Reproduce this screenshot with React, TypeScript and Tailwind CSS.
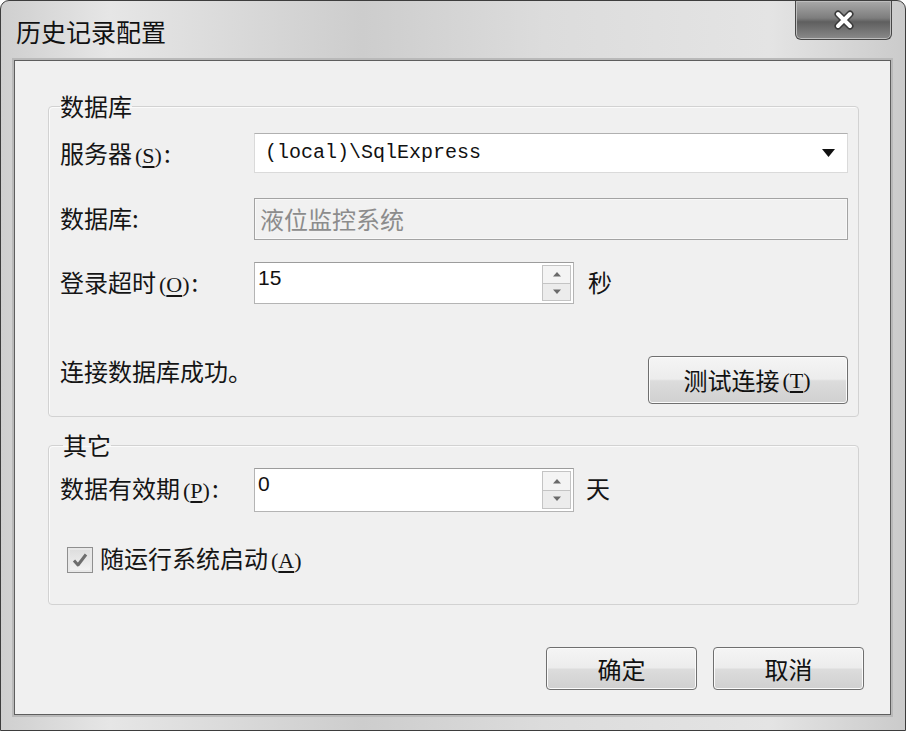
import type { ReactNode } from "react";

const cjk = "font-['Noto_Sans_CJK_SC','Noto_Sans',sans-serif]";

function Label({ children }: { children: ReactNode }) {
  return <div className="w-[194px] shrink-0 pt-[5px] text-[24px] leading-[30px] text-[#151515]">{children}</div>;
}

function Key({ k }: { k: string }) {
  return (
    <span className="ml-[3px] mr-[2px] font-['Liberation_Serif',serif] text-[22px]">
      (<span className="underline underline-offset-[3px]">{k}</span>)
    </span>
  );
}

function SpinBox({ value, tall }: { value: string; tall?: boolean }) {
  return (
    <div className={`flex w-[320px] border border-[#b4b4b4] border-t-[#9c9c9c] bg-white ${tall ? "h-[44px]" : "h-[42px]"}`}>
      <div className="flex-1 pl-[3px] pt-[3px] font-['Liberation_Sans',sans-serif] text-[21px] leading-[24px] text-[#111]">{value}</div>
      <div className="my-[2px] mr-[2px] flex w-[29px] flex-col border border-[#c4c4c4]">
        <div className="flex flex-1 items-center justify-center border-b border-[#c4c4c4] bg-[#f4f4f4]">
          <svg width="10" height="6" viewBox="0 0 10 6">
            <path d="M1 5.5 L5 1 L9 5.5 Z" fill="#6a6a6a" />
          </svg>
        </div>
        <div className="flex flex-1 items-center justify-center bg-[#ececec]">
          <svg width="10" height="6" viewBox="0 0 10 6">
            <path d="M1 0.5 L5 5 L9 0.5 Z" fill="#6a6a6a" />
          </svg>
        </div>
      </div>
    </div>
  );
}

function WinButton({ children, className }: { children: ReactNode; className?: string }) {
  return (
    <div
      className={`flex items-center justify-center rounded-[4px] border border-[#6f6f6f] bg-[linear-gradient(#f5f5f5_0%,#ececec_48%,#dcdcdc_52%,#d0d0d0_100%)] shadow-[inset_0_0_0_1px_#fbfbfb] text-[24px] text-[#111] ${className ?? ""}`}
    >
      {children}
    </div>
  );
}

export default function App() {
  return (
    <div className={`${cjk} h-[731px] w-[906px] overflow-hidden bg-white`}>
      <div className="flex h-[731px] w-[906px] flex-col rounded-t-[9px] border border-[#3d3d3d] bg-[linear-gradient(90deg,#cfcfcf_0%,#e6e6e6_12%,#cdcdcd_40%,#dcdcdc_60%,#e4e4e4_85%,#cbcbcb_100%)]">
        {/* title bar */}
        <div className="flex h-[59px] items-start pl-[15px] pr-[13px]">
          <div className="mt-[15px] text-[25px] leading-[30px] text-[#111]">历史记录配置</div>
          <div className="ml-auto flex h-[39px] w-[97px] items-center justify-center rounded-b-[6px] border border-t-0 border-[#474747] bg-[linear-gradient(#a9a9a9_0%,#7d7d7d_45%,#5f5f5f_55%,#8a8a8a_100%)] shadow-[inset_0_0_0_1px_#bdbdbd]">
            <svg width="24" height="20" viewBox="0 0 24 20">
              <path d="M6 4 L18 16 M18 4 L6 16" stroke="#3a3a3a" strokeWidth="7" strokeLinecap="round" />
              <path d="M6 4 L18 16 M18 4 L6 16" stroke="#ffffff" strokeWidth="4" strokeLinecap="round" />
            </svg>
          </div>
        </div>

        {/* client area */}
        <div className="ml-[13px] flex h-[655px] w-[877px] flex-col border border-[#5e5e5e] bg-[#f0f0f0] pl-[33px] pt-[30px] shadow-[0_0_0_2px_#b9b9b9]">
          <fieldset className="w-[811px] rounded-[4px] border border-[#d2d2d2] pb-[12px] pl-[11px] pr-[10px] shadow-[inset_1px_1px_0_#fbfbfb]">
            <legend className="text-[24px] leading-[30px] text-[#151515]">数据库</legend>

            <div className="mt-[12px] flex items-start">
              <Label>
                服务器<Key k="S" />:
              </Label>
              <div className="flex h-[40px] w-[594px] items-center justify-between border border-[#dadada] border-t-[#b0b0b0] bg-white pl-[10px] pr-[12px]">
                <span className="font-['Liberation_Mono',monospace] text-[20px] text-[#111]">(local)\SqlExpress</span>
                <svg width="13" height="8" viewBox="0 0 13 8">
                  <path d="M0 0 H13 L6.5 8 Z" fill="#111" />
                </svg>
              </div>
            </div>

            <div className="mt-[25px] flex items-start">
              <Label>数据库:</Label>
              <div className="flex h-[42px] w-[594px] items-center border border-[#a3a3a3] bg-[#f1f1f1] pl-[5px] shadow-[inset_0_0_0_1px_#f8f8f8]">
                <span className="text-[24px] leading-[30px] text-[#8c8c8c]">液位监控系统</span>
              </div>
            </div>

            <div className="mt-[22px] flex items-start">
              <Label>
                登录超时<Key k="O" />:
              </Label>
              <SpinBox value="15" />
              <div className="ml-[14px] pt-[5px] text-[24px] leading-[30px] text-[#151515]">秒</div>
            </div>

            <div className="mt-[52px] flex items-start justify-between">
              <div className="text-[24px] leading-[30px] text-[#151515]">连接数据库成功。</div>
              <WinButton className="h-[48px] w-[200px]">
                测试连接<Key k="T" />
              </WinButton>
            </div>
          </fieldset>

          <fieldset className="mt-[13px] w-[811px] rounded-[4px] border border-[#d2d2d2] pb-[28px] pl-[11px] pr-[10px] shadow-[inset_1px_1px_0_#fbfbfb]">
            <legend className="ml-[3px] text-[24px] leading-[30px] text-[#151515]">其它</legend>

            <div className="mt-[8px] flex items-start">
              <Label>
                数据有效期<Key k="P" />:
              </Label>
              <SpinBox value="0" tall />
              <div className="ml-[12px] pt-[5px] text-[24px] leading-[30px] text-[#151515]">天</div>
            </div>

            <div className="ml-[7px] mt-[31px] flex items-center">
              <div className="flex h-[26px] w-[26px] items-center justify-center border border-[#8f8f8f] bg-[linear-gradient(#dcdcdc,#f4f4f4)] shadow-[inset_0_0_0_2px_#e8e8e8]">
                <svg width="18" height="18" viewBox="0 0 18 18">
                  <path d="M3 9.5 L7 14 L15 3.5" stroke="#6e6e6e" strokeWidth="3" fill="none" strokeLinejoin="round" />
                </svg>
              </div>
              <div className="ml-[7px] text-[24px] leading-[30px] text-[#151515]">
                随运行系统启动<Key k="A" />
              </div>
            </div>
          </fieldset>

          <div className="mt-[42px] flex justify-end gap-[16px] pr-[26px]">
            <WinButton className="h-[43px] w-[151px]">确定</WinButton>
            <WinButton className="h-[43px] w-[151px]">取消</WinButton>
          </div>
        </div>
      </div>
    </div>
  );
}
